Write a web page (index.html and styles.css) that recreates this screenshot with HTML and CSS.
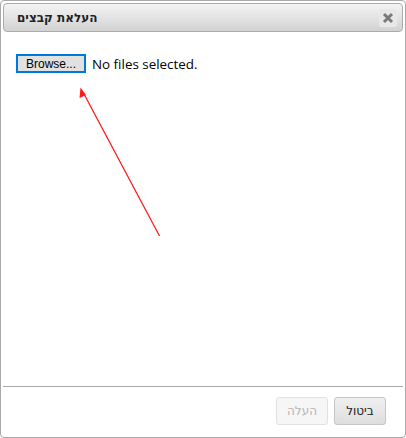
FILE: index.html
```html
<!DOCTYPE html>
<html lang="he">
<head>
<meta charset="utf-8">
<link rel="stylesheet" href="styles.css">
</head>
<body>
<div class="dialog">
  <div class="titlebar">
    <span class="title" dir="rtl">העלאת קבצים</span>
    <button class="close" aria-label="close">
      <svg width="12" height="12" viewBox="0 0 12 12"><path d="M2 2 L10 10 M10 2 L2 10" stroke="#7a7a7a" stroke-width="3" stroke-linecap="butt"/></svg>
    </button>
  </div>
  <div class="content">
    <div class="file-row">
      <span class="browse">Browse...</span>
      <span class="status">No files selected.</span>
    </div>
  </div>
  <div class="footer">
    <button class="btn" dir="rtl">ביטול</button>
    <button class="btn disabled" dir="rtl">העלה</button>
  </div>
  <svg class="arrow" width="406" height="438" viewBox="0 0 406 438">
    <line x1="159.5" y1="236" x2="84" y2="94" stroke="#ff1a1a" stroke-width="1.3"/>
    <polygon points="80.5,87.5 79.5,98 86,95" fill="#ff1a1a"/>
  </svg>
</div>
</body>
</html>
```
FILE: styles.css
```css
html, body { margin: 0; padding: 0; background: #fff; }
.dialog {
  position: relative;
  box-sizing: border-box;
  width: 406px;
  height: 438px;
  border: 1px solid #a9a9a9;
  border-radius: 4px;
  padding: 2px;
  display: flex;
  flex-direction: column;
  background: #fff;
  font-family: "DejaVu Sans", "Liberation Sans", sans-serif;
}
.titlebar {
  box-sizing: border-box;
  height: 29px;
  border: 1px solid #ababab;
  border-radius: 4px;
  background: linear-gradient(#f4f4f4, #d2d2d2);
  display: flex;
  align-items: center;
  justify-content: space-between;
  padding: 0 5px 0 13px;
}
.title {
  font-weight: bold;
  font-size: 12px;
  color: #222;
}
.close {
  width: 18px;
  height: 18px;
  border: none;
  border-radius: 2px;
  background: #e8e8e8;
  padding: 0;
  display: flex;
  align-items: center;
  justify-content: center;
}
.content {
  flex: 1;
  padding: 22px 13px;
}
.file-row {
  display: flex;
  align-items: center;
  gap: 6px;
}
.browse {
  box-sizing: border-box;
  width: 70px;
  height: 19px;
  border: 2px solid #0078d7;
  background: #e1e1e1;
  font-family: "Liberation Sans", sans-serif;
  font-size: 12px;
  color: #000;
  display: flex;
  align-items: center;
  justify-content: center;
}
.status {
  font-family: "Open Sans", "DejaVu Sans", sans-serif;
  font-size: 13.4px;
  color: #000;
}
.footer {
  border-top: 1px solid #a9a9a9;
  height: 49px;
  box-sizing: border-box;
  display: flex;
  flex-direction: row-reverse;
  align-items: flex-start;
  padding: 10px 17px 0;
  gap: 6px;
}
.btn {
  box-sizing: border-box;
  width: 52px;
  height: 28px;
  border: 1px solid #c5c5c5;
  border-radius: 3px;
  background: linear-gradient(#f0f0f0, #dedede);
  font-family: "DejaVu Sans", sans-serif;
  font-size: 12px;
  color: #222;
  padding: 0;
}
.btn.disabled {
  background: #f6f6f6;
  border-color: #e2e2e2;
  color: #b5b5b5;
}
.arrow {
  position: absolute;
  left: -1px;
  top: -1px;
  pointer-events: none;
}
```
